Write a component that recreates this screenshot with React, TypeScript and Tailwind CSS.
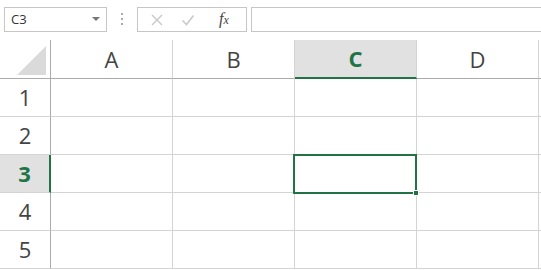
const cols = ['A', 'B', 'C', 'D']
const rows = [1, 2, 3, 4, 5]

const ColHeader = ({ label }: { label: string }) => {
  const active = label === 'C'
  return (
    <div
      className={
        active
          ? 'flex h-[39px] items-center justify-center border-r border-b-2 border-r-[#d4d4d4] border-b-[#217346] bg-[#e1e1e1] text-[22px] font-bold text-[#217346]'
          : 'flex h-[39px] items-center justify-center border-r border-b border-r-[#d4d4d4] border-b-[#ababab] text-[22px] text-[#444]'
      }
    >
      {label}
    </div>
  )
}

const RowHeader = ({ n }: { n: number }) => {
  const active = n === 3
  return (
    <div
      className={
        active
          ? 'flex h-[38px] items-center justify-center border-r-2 border-b border-r-[#217346] border-b-[#d4d4d4] bg-[#e1e1e1] text-[22px] font-bold text-[#217346]'
          : 'flex h-[38px] items-center justify-center border-r border-b border-r-[#ababab] border-b-[#d4d4d4] text-[22px] text-[#444]'
      }
    >
      {n}
    </div>
  )
}

const App = () => {
  return (
    <div className="h-[270px] w-[541px] overflow-hidden bg-white font-['Open_Sans',sans-serif]">
      {/* formula bar */}
      <div className="flex h-[40px] items-start pt-[7px]">
        <div className="ml-[4px] flex h-[25px] w-[103px] items-center justify-between border border-[#c6c6c6] pr-[6px] pl-[6px] text-[13px] text-[#333]">
          <span>C3</span>
          <span className="mt-[-2px] h-0 w-0 border-x-[4px] border-t-[4px] border-x-transparent border-t-[#777]" />
        </div>
        <div className="mx-[12px] mt-[6px] flex w-[6px] flex-col items-center gap-[3px]">
          <span className="h-[2px] w-[2px] bg-[#aaa]" />
          <span className="h-[2px] w-[2px] bg-[#aaa]" />
          <span className="h-[2px] w-[2px] bg-[#aaa]" />
        </div>
        <div className="flex h-[25px] w-[110px] items-center border border-[#c6c6c6]">
          <svg width="14" height="14" viewBox="0 0 14 14" className="ml-[12px]">
            <path d="M2 2 L12 12 M12 2 L2 12" stroke="#c8c8c8" strokeWidth="1.4" fill="none" />
          </svg>
          <svg width="14" height="14" viewBox="0 0 14 14" className="ml-[17px]">
            <path d="M1.5 7.5 L5.5 11.5 L12.5 2.5" stroke="#c8c8c8" strokeWidth="1.5" fill="none" />
          </svg>
          <span className="ml-[24px] mt-[-2px] font-['Liberation_Serif',serif] text-[16px] italic text-[#444]">
            f<span className="text-[12px]">x</span>
          </span>
        </div>
        <div className="ml-[4px] h-[25px] flex-1 border border-r-0 border-[#c6c6c6]" />
      </div>

      {/* grid */}
      <div className="relative grid grid-cols-[51px_122px_122px_122px_122px_1fr]">
        <div className="relative h-[39px] border-r border-b border-r-[#ababab] border-b-[#ababab]">
          <div className="absolute right-[4px] bottom-[3px] h-0 w-0 border-b-[29px] border-l-[29px] border-b-[#dadada] border-l-transparent" />
        </div>
        {cols.map(c => (
          <ColHeader key={c} label={c} />
        ))}
        <div className="h-[39px] border-b border-b-[#ababab]" />

        {rows.map(n => (
          <div key={n} className="contents">
            <RowHeader n={n} />
            {cols.map(c => (
              <div key={c} className="h-[38px] border-r border-b border-[#d4d4d4]" />
            ))}
            <div className="h-[38px] border-b border-[#d4d4d4]" />
          </div>
        ))}

        {/* active cell */}
        <div className="absolute top-[114px] left-[293px] h-[40px] w-[124px] border-2 border-[#217346]">
          <div className="absolute right-[-4px] bottom-[-4px] h-[6px] w-[6px] border border-white bg-[#217346]" />
        </div>
      </div>
    </div>
  )
}

export default App
